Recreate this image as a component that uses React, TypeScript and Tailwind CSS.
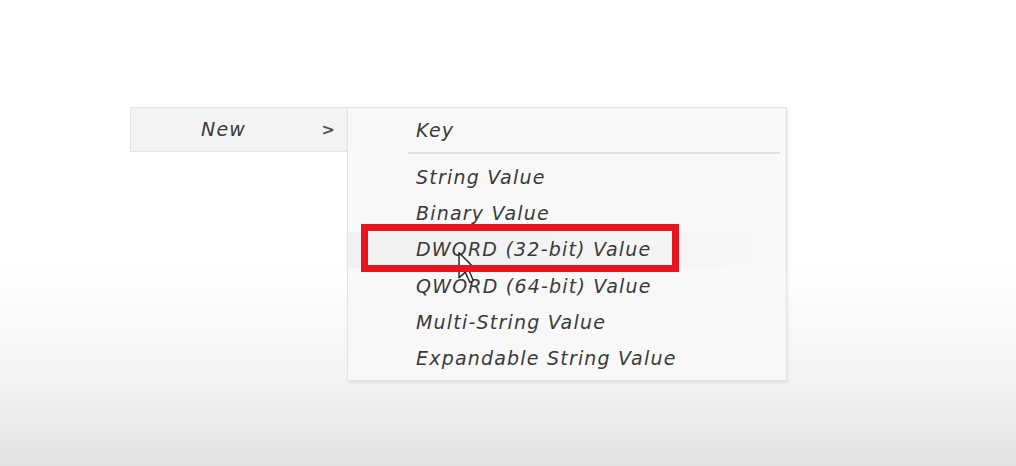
const items = [
  "String Value",
  "Binary Value",
  "DWORD (32-bit) Value",
  "QWORD (64-bit) Value",
  "Multi-String Value",
  "Expandable String Value",
]

const Cursor = () => (
  <svg width="22" height="34" viewBox="0 0 12 19" className="absolute left-[457px] top-[251px]">
    <path
      d="M1 1 L1 15 L4.5 11.8 L7 17.5 L9 16.6 L6.6 11 L11 11 Z"
      fill="#ffffff"
      stroke="#222222"
      strokeWidth="0.8"
      strokeLinejoin="round"
    />
  </svg>
)

export default function App() {
  return (
    <div
      className="relative w-[1016px] h-[466px] overflow-hidden bg-[linear-gradient(to_bottom,#ffffff_0%,#ffffff_58%,#f3f3f3_82%,#e2e2e2_100%)] text-[#3a3a3a]"
      style={{ fontFamily: '"DejaVu Sans", "Open Sans", sans-serif' }}
    >
      <div className="flex items-start pt-[107px] pl-[130px]">
        {/* parent item */}
        <div className="w-[217px] h-[45px] flex items-center bg-[#f3f3f3] border border-[#e4e4e4] border-r-0">
          <span className="ml-[70px] italic text-[19px] tracking-[1.2px]">New</span>
          <span className="ml-auto mr-[12px] text-[16px] font-bold text-[#555]">&gt;</span>
        </div>

        {/* submenu */}
        <div className="w-[440px] h-[274px] flex flex-col bg-[#f8f8f8] border border-[#e2e2e2] shadow-[1px_2px_3px_rgba(0,0,0,0.08)]">
          <div className="h-[44px] flex items-center pl-[68px] italic text-[19px] tracking-[1.2px]">Key</div>
          <div className="ml-[60px] mr-[6px] h-[2px] bg-[#e0e0e0]" />
          <div className="flex flex-col pt-[5px]">
            {items.map((label, i) => (
              <div
                key={label}
                className={
                  "h-[36.3px] flex items-center pl-[68px] italic text-[19px] tracking-[1.2px] whitespace-nowrap " +
                  (i === 2 ? "bg-[linear-gradient(to_right,#f1f1f1,#f4f4f4_70%,#f8f8f8)]" : "")
                }
              >
                {label}
              </div>
            ))}
          </div>
        </div>
      </div>

      <Cursor />

      {/* highlight box */}
      <div className="absolute left-[361px] top-[224px] w-[318px] h-[48px] border-[7px] border-[#e8141e]" />
    </div>
  )
}
